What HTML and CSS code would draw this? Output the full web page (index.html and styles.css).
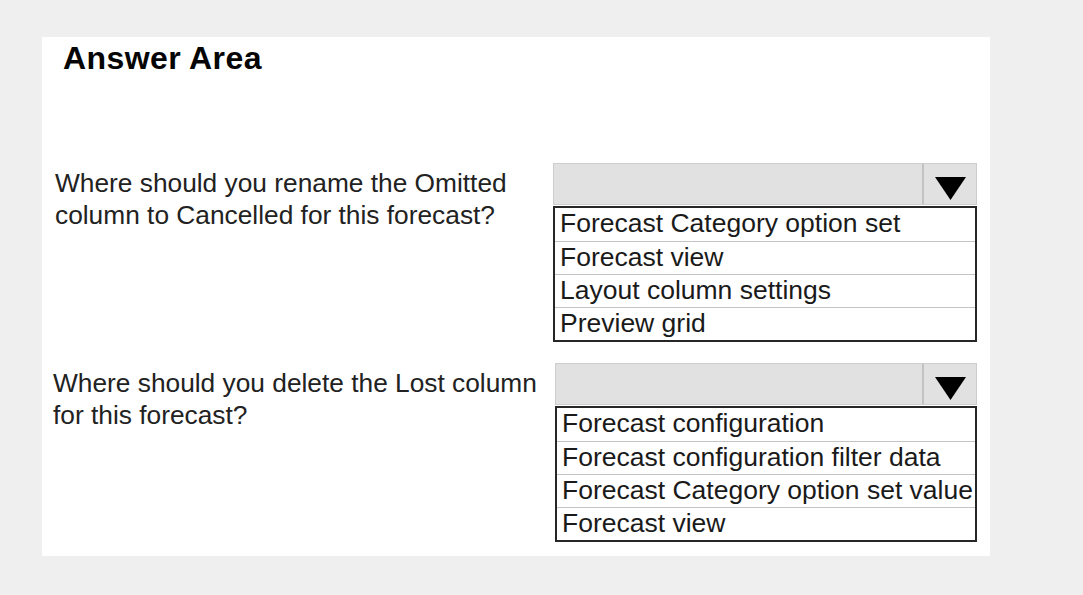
FILE: index.html
```html
<!DOCTYPE html>
<html lang="en">
<head>
<meta charset="utf-8">
<title>Answer Area</title>
<link rel="stylesheet" href="styles.css">
</head>
<body>
<div class="panel">
  <h1 class="title">Answer Area</h1>
  <div class="question q1">
    <p class="prompt">Where should you rename the Omitted column to Cancelled for this forecast?</p>
    <div class="dropdown">
      <div class="select">
        <span class="value"></span>
        <span class="arrow"><svg width="31" height="23" viewBox="0 0 31 23"><polygon points="0,0 31,0 15.5,23" fill="#000"/></svg></span>
      </div>
      <ul class="options">
        <li>Forecast Category option set</li>
        <li>Forecast view</li>
        <li>Layout column settings</li>
        <li>Preview grid</li>
      </ul>
    </div>
  </div>
  <div class="question q2">
    <p class="prompt">Where should you delete the Lost column for this forecast?</p>
    <div class="dropdown">
      <div class="select">
        <span class="value"></span>
        <span class="arrow"><svg width="31" height="23" viewBox="0 0 31 23"><polygon points="0,0 31,0 15.5,23" fill="#000"/></svg></span>
      </div>
      <ul class="options">
        <li>Forecast configuration</li>
        <li>Forecast configuration filter data</li>
        <li>Forecast Category option set value</li>
        <li>Forecast view</li>
      </ul>
    </div>
  </div>
</div>
</body>
</html>
```

FILE: styles.css
```css
html, body {
  margin: 0;
  padding: 0;
}
body {
  background: #efefef;
  font-family: "Liberation Sans", Arial, sans-serif;
  color: #1c1c1c;
  width: 1083px;
  height: 595px;
  overflow: hidden;
}
.panel {
  box-sizing: border-box;
  margin: 37px 0 0 42px;
  width: 948px;
  height: 519px;
  background: #ffffff;
  padding: 1px 0 0 13px;
}
.title {
  margin: 0 0 0 8px;
  font-size: 32px;
  line-height: 40px;
  font-weight: bold;
  color: #050505;
  letter-spacing: 0.4px;
}
.question {
  display: grid;
  grid-template-columns: 498px 424px;
  align-items: start;
}
.q1 {
  margin-top: 85px;
}
.q2 {
  margin-top: 21px;
}
.q2 .prompt {
  margin-left: -2px;
}
.q2 .dropdown {
  margin-left: 2px;
}
.prompt {
  margin: 4px 0 0 0;
  font-size: 26.3px;
  line-height: 32px;
  width: 490px;
  color: #222;
}
.dropdown {
  display: flex;
  flex-direction: column;
}
.select {
  display: flex;
  height: 42px;
  box-sizing: border-box;
  background: #e1e1e1;
  border: 1px solid #cdcdcd;
}
.value {
  flex: 1;
}
.arrow {
  width: 54px;
  border-left: 2px solid #c2c2c2;
  display: flex;
  justify-content: center;
  align-items: flex-start;
  padding-top: 13px;
  box-sizing: border-box;
}
.arrow svg {
  display: block;
}
.options {
  list-style: none;
  margin: 1px 0 0 0;
  padding: 0;
  border: 2px solid #262626;
}
.options li {
  font-size: 26.5px;
  line-height: 30px;
  height: 33px;
  box-sizing: border-box;
  padding: 0 0 0 5px;
  white-space: nowrap;
  color: #1a1a1a;
}
.options li + li {
  border-top: 1px solid #c4c4c4;
  height: 33px;
}
```
